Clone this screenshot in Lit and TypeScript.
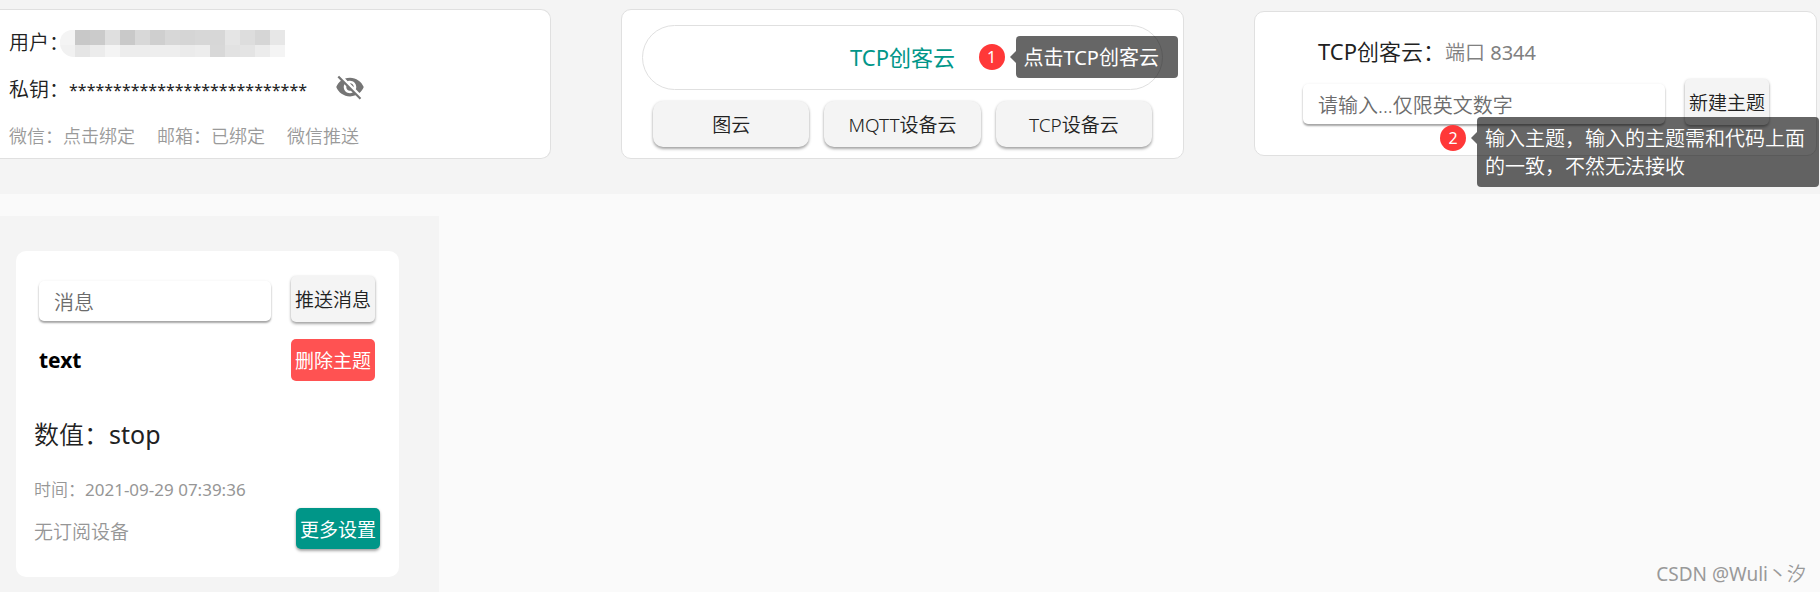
import { LitElement, html, css } from "lit";
import { customElement, state } from "lit/decorators.js";

const MOSAIC_TOP = ["f4", "c8", "cb", "df", "c9", "d8", "cf", "d7", "d5", "d7", "d7", "e5", "dd", "d6", "e7"];
const MOSAIC_BOTTOM = ["f1", "e5", "ec", "f4", "ed", "ed", "ee", "ee", "eb", "ed", "d8", "e2", "e4", "ec", "f4"];
const CLOUDS = ["图云", "MQTT设备云", "TCP设备云"];

@customElement("app-root")
export class AppRoot extends LitElement {
  @state() private secret = "*".repeat(27);

  static styles = css`
    :host {
      display: block;
      min-height: 100vh;
      position: relative;
      background: #fafafa;
      color: #212121;
      font-family: "Noto Sans", "Noto Sans CJK SC", sans-serif;
      font-size: 20px;
      font-weight: 350;
      line-height: 28px;
      overflow: hidden;
    }
    * {
      box-sizing: border-box;
    }
    button,
    input {
      font: inherit;
      color: inherit;
      border: 0;
      margin: 0;
      outline: none;
    }
    button {
      cursor: pointer;
      white-space: nowrap;
    }
    .latin {
      font-weight: 400;
    }
    .top {
      display: grid;
      grid-template-columns: 551fr 563fr 563fr;
      gap: 70px;
      align-items: start;
      padding: 9px 3px 35px 0;
      background: #f4f4f4;
    }
    .card {
      background: #fff;
      border: 1px solid #e0e0e0;
      border-radius: 10px;
      height: 150px;
    }
    .account {
      border-left: 0;
      border-radius: 0 10px 10px 0;
      padding: 19px 9px 0;
    }
    .row {
      display: flex;
      align-items: center;
    }
    .user {
      height: 28px;
    }
    .key {
      height: 28px;
      margin-top: 19px;
    }
    .mosaic {
      display: grid;
      grid-template-columns: repeat(15, 15px);
      grid-template-rows: 15px 12px;
      margin-left: -9px;
      border-radius: 12px 0 0 14px;
      overflow: hidden;
    }
    .stars {
      font-size: 16px;
      font-weight: 400;
      white-space: nowrap;
    }
    .eye {
      display: flex;
      padding: 0 0 6px;
      margin-left: 28px;
      background: none;
      color: #757575;
    }
    .links {
      margin-top: 18px;
      gap: 22px;
      font-size: 18px;
    }
    .links a {
      color: #9a9a9a;
      text-decoration: none;
    }
    .clouds {
      padding: 15px 20px 0;
    }
    .pill {
      display: flex;
      align-items: center;
      justify-content: center;
      width: 100%;
      height: 65px;
      border: 1px solid #e0e0e0;
      border-radius: 33px;
      background: none;
      padding: 0 0 2px;
      color: #009688;
      font-size: 22px;
      font-weight: 400;
    }
    .pill-wrap {
      position: relative;
    }
    .trio {
      display: grid;
      grid-template-columns: repeat(3, 1fr);
      gap: 15px;
      padding: 11px 11px 0;
    }
    .btn {
      height: 46px;
      padding: 2px 4px 0;
      border-radius: 5px;
      background: #f4f4f4;
      font-size: 19px;
      box-shadow: 0 2px 3px rgba(0, 0, 0, 0.34), 0 0 3px rgba(0, 0, 0, 0.08);
    }
    .round {
      border-radius: 10px;
    }
    .side {
      width: 84px;
    }
    .red {
      height: 42px;
      background: #ff5252;
      color: #fff;
      font-weight: 400;
      box-shadow: none;
    }
    .teal {
      height: 41px;
      background: #009688;
      color: #fff;
      font-weight: 400;
    }
    .create {
      position: relative;
      margin-top: 2px;
      height: 145px;
      padding: 25px 47px 0 48px;
    }
    .title {
      padding-left: 15px;
      font-size: 22px;
    }
    .port {
      font-size: 20px;
      color: #808080;
    }
    .form {
      display: flex;
      align-items: flex-end;
      gap: 20px;
      margin-top: 12px;
    }
    .field {
      flex: 1;
      min-width: 0;
      height: 40px;
      margin-bottom: 1px;
      padding: 3px 15px 0;
      border-radius: 5px;
      background: #fff;
      box-shadow: 0 2px 2px rgba(0, 0, 0, 0.34), 0 0 3px rgba(0, 0, 0, 0.06);
    }
    .field::placeholder {
      color: #6c6c6c;
      opacity: 1;
    }
    .hint {
      position: absolute;
      display: flex;
      gap: 11px;
      z-index: 2;
      color: #fff;
    }
    .hint-one {
      left: calc(50% + 76px);
      top: 11px;
    }
    .hint-two {
      left: 185px;
      top: 105px;
      right: -3px;
    }
    .num {
      flex: none;
      width: 26px;
      height: 26px;
      margin-top: 8px;
      border-radius: 50%;
      background: #ff3838;
      font-size: 16px;
      font-weight: 400;
      line-height: 26px;
      text-align: center;
    }
    .tip {
      position: relative;
      padding: 8px 8px 6px;
      border-radius: 4px;
      background: rgba(0, 0, 0, 0.6);
    }
    .tip::before {
      content: "";
      position: absolute;
      left: -6px;
      top: 15px;
      border: 6px solid transparent;
      border-left-width: 0;
      border-right-color: rgba(0, 0, 0, 0.6);
    }
    .tip-one {
      width: 162px;
      font-weight: 400;
      white-space: nowrap;
    }
    .tip-two {
      flex: 1;
    }
    .panel {
      width: 439px;
      min-height: calc(100vh - 216px);
      margin-top: 22px;
      padding: 35px 40px 15px 16px;
      background: #f4f4f4;
    }
    .topic {
      background: #fff;
      border-radius: 10px;
      padding: 25px 19px 28px 18px;
    }
    .send {
      margin: 0;
      padding: 0 5px;
    }
    .name {
      display: flex;
      justify-content: space-between;
      align-items: center;
      margin-top: 17px;
      padding: 0 5px;
    }
    .name h2 {
      margin: 0;
      font-size: 21px;
      font-weight: 700;
      color: #000;
    }
    .value {
      margin: 35px 0 0;
      font-size: 25px;
      line-height: 36px;
    }
    .time {
      margin: 24px 0 0;
      font-size: 17px;
      color: #969696;
    }
    .foot {
      display: flex;
      justify-content: space-between;
      align-items: flex-end;
      margin-top: 4px;
      color: #969696;
      font-size: 19px;
    }
    .foot span {
      padding-bottom: 3px;
    }
    .mark {
      position: absolute;
      right: 14px;
      bottom: 4px;
      color: #999;
      font-size: 19px;
    }
    @media (max-width: 1100px) {
      .top {
        grid-template-columns: 1fr;
        gap: 20px;
      }
    }
  `;

  private cell(shade: string) {
    return html`<span style="background:#${shade}${shade}${shade}"></span>`;
  }

  render() {
    return html`
      <header class="top">
        <section class="card account">
          <div class="row user">
            <span>用户：</span>
            <span class="mosaic">${[...MOSAIC_TOP, ...MOSAIC_BOTTOM].map((s) => this.cell(s))}</span>
          </div>
          <div class="row key">
            <span>私钥：</span>
            <span class="stars">${this.secret}</span>
            <button class="eye" type="button" aria-label="显示私钥">
              <svg width="30" height="30" viewBox="0 0 24 24" fill="currentColor">
                <path d="M12 7c2.76 0 5 2.24 5 5 0 .65-.13 1.26-.36 1.83l2.92 2.92c1.51-1.26 2.7-2.89 3.43-4.75-1.73-4.39-6-7.5-11-7.5-1.4 0-2.74.25-3.98.7l2.16 2.16C10.74 7.13 11.35 7 12 7zM2 4.27l2.28 2.28.46.46C3.08 8.3 1.78 10.02 1 12c1.73 4.39 6 7.5 11 7.5 1.55 0 3.03-.3 4.38-.84l.42.42L19.73 22 21 20.73 3.27 3 2 4.27zM7.53 9.8l1.55 1.55c-.05.21-.08.43-.08.65 0 1.66 1.34 3 3 3 .22 0 .44-.03.65-.08l1.55 1.55c-.67.33-1.41.53-2.2.53-2.76 0-5-2.24-5-5 0-.79.2-1.53.53-2.2zm4.31-.78l3.15 3.15.02-.16c0-1.66-1.34-3-3-3l-.17.01z"/>
              </svg>
            </button>
          </div>
          <nav class="row links">
            <a href="#">微信：点击绑定</a>
            <a href="#">邮箱：已绑定</a>
            <a href="#">微信推送</a>
          </nav>
        </section>

        <section class="card clouds">
          <div class="pill-wrap">
            <button class="pill" type="button">TCP创客云</button>
            <div class="hint hint-one">
              <span class="num">1</span>
              <span class="tip tip-one">点击TCP创客云</span>
            </div>
          </div>
          <div class="trio">
            ${CLOUDS.map((c) => html`<button class="btn round" type="button">${c}</button>`)}
          </div>
        </section>

        <section class="card create">
          <div class="title"><span class="latin">TCP</span>创客云：<span class="port">端口 <span class="latin">8344</span></span></div>
          <form class="form" @submit=${(e: Event) => e.preventDefault()}>
            <input class="field" type="text" aria-label="主题" placeholder="请输入...仅限英文数字" />
            <button class="btn side" type="submit">新建主题</button>
          </form>
          <div class="hint hint-two">
            <span class="num">2</span>
            <span class="tip tip-two">输入主题，输入的主题需和代码上面的一致，不然无法接收</span>
          </div>
        </section>
      </header>

      <main class="panel">
        <article class="topic">
          <form class="form send" @submit=${(e: Event) => e.preventDefault()}>
            <input class="field" type="text" aria-label="消息" placeholder="消息" />
            <button class="btn side" type="submit">推送消息</button>
          </form>
          <div class="name">
            <h2>text</h2>
            <button class="btn side red" type="button">删除主题</button>
          </div>
          <p class="value">数值：<span class="latin">stop</span></p>
          <p class="time">时间：<time class="latin">2021-09-29 07:39:36</time></p>
          <div class="foot">
            <span>无订阅设备</span>
            <button class="btn side teal" type="button">更多设置</button>
          </div>
        </article>
      </main>
      <div class="mark"><span class="latin">CSDN @Wuli</span>丶汐</div>
    `;
  }
}
